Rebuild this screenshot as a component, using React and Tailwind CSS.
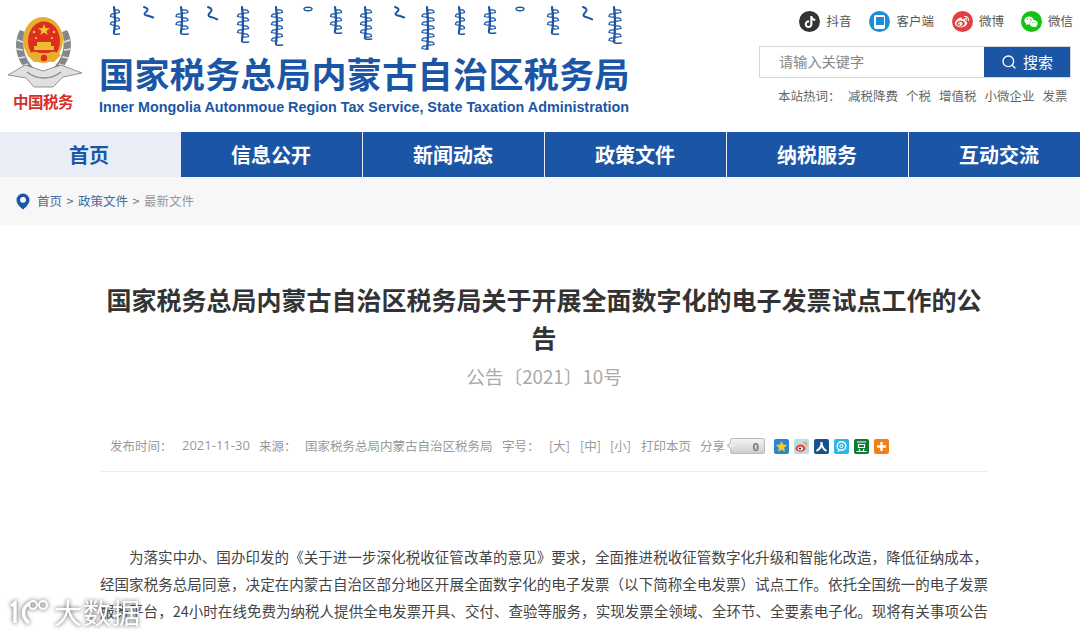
import React from 'react';
import { Search } from 'lucide-react';
import { FaTiktok, FaWeibo, FaWeixin } from 'react-icons/fa';

const font = { fontFamily: '"Noto Sans CJK SC", "Liberation Sans", sans-serif' };

const navItems = ['信息公开', '新闻动态', '政策文件', '纳税服务', '互动交流'];
const hotWords = ['减税降费', '个税', '增值税', '小微企业', '发票'];

// Decorative brush strokes of the Mongolian banner in the logo
const scriptMarks = [
  { x: 115, h: 25, w: 9 },
  { x: 148, h: 11, w: 12, short: true },
  { x: 182, h: 25, w: 12 },
  { x: 212, h: 13, w: 12, short: true },
  { x: 243, h: 33, w: 11 },
  { x: 277, h: 36, w: 11 },
  { x: 308, h: 3, w: 8, dot: true },
  { x: 336, h: 24, w: 11 },
  { x: 366, h: 30, w: 11 },
  { x: 399, h: 11, w: 12, short: true },
  { x: 428, h: 45, w: 12 },
  { x: 460, h: 25, w: 9 },
  { x: 490, h: 24, w: 11 },
  { x: 520, h: 3, w: 8, dot: true },
  { x: 553, h: 25, w: 11 },
  { x: 587, h: 13, w: 12, short: true },
  { x: 615, h: 34, w: 12 },
];

function MongolianBanner() {
  return (
    <svg width="540" height="50" viewBox="99 0 540 50" fill="none" stroke="#1b56a6" strokeLinecap="round" className="block">
      {scriptMarks.map((m, i) => {
        const top = 7;
        if (m.dot) {
          return <ellipse key={i} cx={m.x} cy={top + 2} rx={m.w / 2} ry="1.8" strokeWidth="1.4" />;
        }
        if (m.short) {
          return (
            <path key={i} strokeWidth="2" d={`M${m.x - 4} ${top}q6 2 2 ${m.h * 0.45}q-3 ${m.h * 0.2} 0 ${m.h * 0.3}q4 1 ${m.w * 0.6} ${m.h * 0.2}`} />
          );
        }
        let teeth = '';
        let side = 1;
        for (let y = top + 3; y < top + m.h - 2; y += 4) {
          teeth += `M${m.x} ${y}q${(side * m.w) / 2} -1 ${(side * m.w) / 2} 2.500q${(-side * m.w) / 4} 1 ${(-side * m.w) / 2} 0.500`;
          side = -side;
        }
        return (
          <g key={i}>
            <path strokeWidth="2.2" d={`M${m.x - 1} ${top}q2 ${m.h / 2} 0 ${m.h}`} />
            <path strokeWidth="1.3" d={teeth} />
            <path strokeWidth="1.6" d={`M${m.x - 1} ${top + m.h}q-2 3 ${m.w * 0.6} 2`} />
          </g>
        );
      })}
    </svg>
  );
}

function Emblem() {
  return (
    <svg width="75" height="74" viewBox="8 15 75 74" className="block">
      <path d="M20 30c-7 12-5 30 9 43l6-4C24 60 21 44 25 32z" fill="#85888a" />
      <path d="M67 30c7 12 5 30-9 43l-6-4c11-9 14-25 10-37z" fill="#85888a" />
      <path d="M17 40l6 2M16 49l7 1M18 58l7-1M22 66l6-2M70 40l-6 2M71 49l-7 1M69 58l-7-1M65 66l-6-2" stroke="#e4e4e4" strokeWidth="1.6" />
      <path d="M8 75l17-10 18 6 18-6 21 8-19 4-10 10H34L26 78z" fill="#dfe0df" stroke="#7b7d7e" strokeWidth="0.8" />
      <path d="M27 72c10 8 24 8 34 0" stroke="#8b8d8d" strokeWidth="1.5" fill="none" />
      <ellipse cx="43" cy="40" rx="20" ry="23" fill="#e6ad2e" />
      <ellipse cx="44" cy="41" rx="16" ry="19.500" fill="#dc2f1f" />
      <path d="M44 24l1.500 4.200h4.400l-3.500 2.700 1.300 4.200-3.700-2.600-3.700 2.600 1.300-4.200-3.500-2.700h4.400z" fill="#f6c82f" />
      <circle cx="34" cy="32" r="1.200" fill="#f6c82f" />
      <circle cx="54" cy="32" r="1.200" fill="#f6c82f" />
      <circle cx="36" cy="38" r="1.100" fill="#f6c82f" />
      <circle cx="52" cy="38" r="1.100" fill="#f6c82f" />
      <path d="M34 50v-4h3v-4h14v4h3v4z" fill="#eebc31" />
      <path d="M27 55c5-4 9-4 12-2h10c3-2 7-2 12 2l-7 7H34z" fill="#e6ad2e" />
      <circle cx="44" cy="58" r="3.200" fill="#dc2f1f" />
    </svg>
  );
}

function TabletIcon() {
  return (
    <span className="flex h-[21px] w-[21px] items-center justify-center rounded-full bg-[#1b8fd6]">
      <span className="flex h-[14px] w-[11px] justify-center rounded-[2px] bg-white pt-[2px]">
        <span className="h-[8px] w-[8px] bg-[#1b8fd6]"></span>
      </span>
    </span>
  );
}

function SocialLink({ icon, label, className = '' }) {
  return (
    <div className={`flex items-center gap-[6px] ${className}`}>
      {icon}
      <span className="text-[12.5px] text-[#555]">{label}</span>
    </div>
  );
}

function ShareIcons() {
  return (
    <div className="ml-[9px] flex gap-[5px]">
      <svg width="15" height="15" viewBox="0 0 15 15">
        <rect width="15" height="15" rx="2" fill="#2b86d2" />
        <path d="M7.500 2l1.700 3.600 4 .5-3 2.700.8 4-3.500-2-3.500 2 .8-4-3-2.700 4-.5z" fill="#f7c928" />
      </svg>
      <svg width="15" height="15" viewBox="0 0 15 15">
        <rect width="15" height="15" rx="2" fill="#b9dfe6" />
        <ellipse cx="6.500" cy="9.200" rx="5" ry="3.600" fill="#e8463a" />
        <ellipse cx="6.300" cy="9.400" rx="2.600" ry="2" fill="#fff" />
        <circle cx="6" cy="9.500" r="1.100" fill="#222" />
        <path d="M9.500 3.500c2-.4 3.600 1 3 3.200" stroke="#ef8b2c" strokeWidth="1.200" fill="none" />
      </svg>
      <svg width="15" height="15" viewBox="0 0 15 15">
        <rect width="15" height="15" rx="2" fill="#14538f" />
        <path d="M7.500 3c.2 4-1.500 7-5 9M7.500 3c0 4 1.600 7 5 9" stroke="#fff" strokeWidth="2" fill="none" />
      </svg>
      <svg width="15" height="15" viewBox="0 0 15 15">
        <rect width="15" height="15" rx="2" fill="#2fb4e4" />
        <circle cx="7.500" cy="7" r="4.300" stroke="#fff" strokeWidth="1.400" fill="none" />
        <circle cx="7.500" cy="7" r="1.600" stroke="#fff" strokeWidth="1" fill="none" />
        <path d="M4 12.500l2-2" stroke="#fff" strokeWidth="1.400" />
      </svg>
      <svg width="15" height="15" viewBox="0 0 15 15">
        <rect width="15" height="15" rx="2" fill="#0f7a34" />
        <path d="M3 3h9M4.500 5.500h6v3h-6zM5 10l1 2M10 10l-1 2M2.500 12.500h10" stroke="#fff" strokeWidth="1.200" fill="none" />
      </svg>
      <svg width="15" height="15" viewBox="0 0 15 15">
        <rect width="15" height="15" rx="2" fill="#f57f17" />
        <path d="M7.500 3v9M3 7.500h9" stroke="#fff" strokeWidth="2.400" />
      </svg>
    </div>
  );
}

function Watermark() {
  return (
    <div className="absolute bottom-[4px] left-[9px] flex items-center gap-[5px] text-white drop-shadow-[0_0_2px_rgba(70,70,70,0.95)]">
      <svg width="40" height="28" viewBox="0 0 40 28" fill="none" stroke="#fff" strokeWidth="3.400">
        <path d="M2 8l4-3v20" />
        <path d="M21 5c-8 4-9 14-1 20" />
        <circle cx="24" cy="7" r="4" strokeWidth="2" />
        <circle cx="34" cy="7" r="4" strokeWidth="2" />
      </svg>
      <span className="text-[28px] leading-none tracking-[1px]">大数据</span>
    </div>
  );
}

export default function App() {
  return (
    <div className="relative h-[630px] w-[1080px] overflow-hidden bg-white" style={font}>
      <header className="flex h-[132px]">
        <div className="flex w-[99px] shrink-0 flex-col pl-[8px] pt-[15px]">
          <Emblem />
          <span className="ml-[5px] text-[15.5px] font-bold leading-[24px] tracking-[-0.5px] whitespace-nowrap text-[#d3302a]">中国税务</span>
        </div>
        <div className="w-[540px] shrink-0">
          <MongolianBanner />
          <h1 className="mt-[1px] text-[35px] font-bold leading-[44px] tracking-[0.4px] whitespace-nowrap text-[#1b56a6]">国家税务总局内蒙古自治区税务局</h1>
          <p className="mt-[2px] text-[14.35px] font-bold leading-[20px] whitespace-nowrap text-[#1b56a6]" style={{ fontFamily: '"Liberation Sans", sans-serif' }}>
            Inner Mongolia Autonmoue Region Tax Service, State Taxation Administration
          </p>
        </div>
        <div className="ml-[120px] w-[312px] shrink-0 pt-[11px]">
          <div className="-mr-[2px] flex h-[21px] items-center justify-end">
            <SocialLink icon={<span className="flex h-[21px] w-[21px] items-center justify-center rounded-full bg-[#333] text-white"><FaTiktok size={12} /></span>} label="抖音" />
            <SocialLink className="ml-[18px]" icon={<TabletIcon />} label="客户端" />
            <SocialLink className="ml-[18px]" icon={<span className="flex h-[21px] w-[21px] items-center justify-center rounded-full bg-[#e53e3e] text-white"><FaWeibo size={14} /></span>} label="微博" />
            <SocialLink className="ml-[17px]" icon={<span className="flex h-[21px] w-[21px] items-center justify-center rounded-full bg-[#13c213] text-white"><FaWeixin size={14} /></span>} label="微信" />
          </div>
          <div className="mt-[14px] flex h-[32px] border border-[#d5d5d5]">
            <div className="flex flex-1 items-center pb-[1px] pl-[19px] text-[14.2px] text-[#888]">请输入关键字</div>
            <div className="flex w-[86px] items-center justify-center gap-[6px] bg-[#1b56a6] text-[15px] text-white">
              <Search size={16} strokeWidth={2} />
              <span>搜索</span>
            </div>
          </div>
          <div className="mt-[9px] flex text-[12.5px] leading-[18px] text-[#666]">
            <span className="ml-[19px] w-[70px] whitespace-nowrap">本站热词：</span>
            <div className="flex gap-[8px] whitespace-nowrap">
              {hotWords.map((word) => (
                <span key={word}>{word}</span>
              ))}
            </div>
          </div>
        </div>
      </header>

      <nav className="flex h-[45px] bg-[#e8edf6]">
        <div className="flex w-[181px] shrink-0 items-center justify-center pr-[3px] text-[20px] font-bold text-[#1b56a6]">首页</div>
        {navItems.map((item) => (
          <div
            key={item}
            className="mr-[1px] flex w-[181px] shrink-0 items-center justify-center pr-[1px] text-[20px] font-bold text-white bg-[#1b56a6]"
          >
            {item}
          </div>
        ))}
      </nav>

      <div className="flex h-[48px] items-center bg-[#f7f7f7] pl-[16px] text-[12.5px]">
        <svg width="14" height="17" viewBox="0 0 14 17" className="mr-[7px]">
          <path d="M7 0.500a6.500 6.500 0 0 1 6.500 6.500c0 3.800-3.600 7-6.500 9.500C4.100 14 0.500 10.800 0.500 7A6.500 6.500 0 0 1 7 0.500z" fill="#1b56a6" />
          <circle cx="7" cy="6.800" r="2.900" fill="#fff" />
        </svg>
        <span className="text-[#4a6a9c]">首页</span>
        <span className="mx-[4.5px] text-[#4a6a9c]">&gt;</span>
        <span className="text-[#4a6a9c]">政策文件</span>
        <span className="mx-[4.5px] text-[#777]">&gt;</span>
        <span className="text-[#999]">最新文件</span>
      </div>

      <main className="mx-[100px] w-[888px] pt-[55px]">
        <h2 className="text-center text-[25px] font-bold leading-[38px] text-[#333]">
          国家税务总局内蒙古自治区税务局关于开展全面数字化的电子发票试点工作的公告
        </h2>
        <p className="mt-[5px] text-center text-[18.7px] leading-[30px] text-[#aaa]">公告〔2021〕10号</p>

        <div className="mt-[43px] flex h-[24px] items-center pl-[10px] text-[12.5px] whitespace-nowrap text-[#999]">
          <span className="w-[72px]">发布时间：</span>
          <span className="w-[77px] text-[13px]" style={{ fontFamily: '"Open Sans", sans-serif' }}>2021-11-30</span>
          <span className="w-[46px]">来源：</span>
          <span className="w-[197px]">国家税务总局内蒙古自治区税务局</span>
          <span className="w-[47px]">字号：</span>
          <span className="w-[31px]">[大]</span>
          <span className="w-[30px]">[中]</span>
          <span className="w-[31px]">[小]</span>
          <span className="w-[59px]">打印本页</span>
          <span className="w-[30px]">分享</span>
          <div className="relative flex h-[16px] w-[35px] items-center justify-end rounded-[2px] border border-[#bbb] bg-gradient-to-b from-[#f4f4f4] to-[#cfcfcf] pr-[5px] text-[11px] font-bold text-[#777]">
            0
            <span className="absolute -left-[3px] top-[4px] h-[5px] w-[5px] rotate-45 border-b border-l border-[#bbb] bg-[#eee]"></span>
          </div>
          <ShareIcons />
        </div>
        <div className="mt-[13px] h-px bg-[#eeeeee]"></div>

        <div className="mt-[71px] text-justify text-[14.5px] leading-[27px] text-[#444]">
          <p className="indent-[29px]">
            为落实中办、国办印发的《关于进一步深化税收征管改革的意见》要求，全面推进税收征管数字化升级和智能化改造，降低征纳成本，经国家税务总局同意，决定在内蒙古自治区部分地区开展全面数字化的电子发票（以下简称全电发票）试点工作。依托全国统一的电子发票服务平台，24小时在线免费为纳税人提供全电发票开具、交付、查验等服务，实现发票全领域、全环节、全要素电子化。现将有关事项公告如下：
          </p>
        </div>
      </main>

      <Watermark />
    </div>
  );
}
